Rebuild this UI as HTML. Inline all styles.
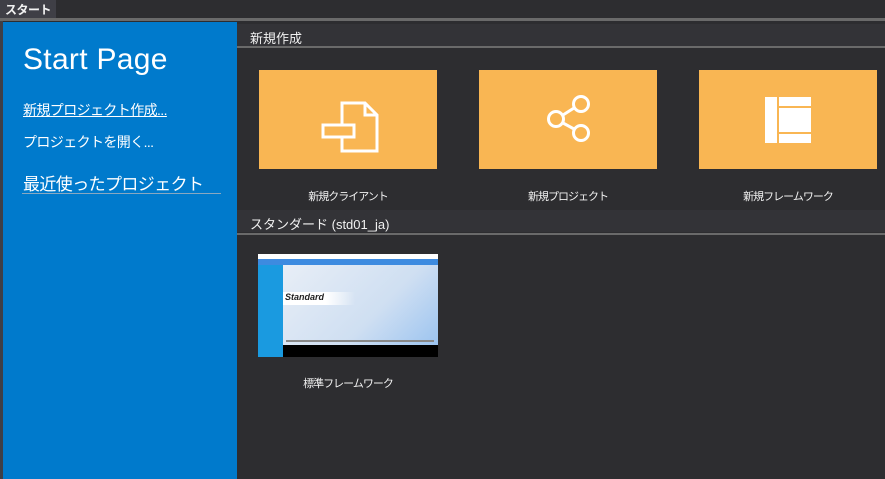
<!DOCTYPE html>
<html><head><meta charset="utf-8"><style>
*{margin:0;padding:0;box-sizing:border-box}
body{width:885px;height:479px;background:#2d2d30;position:relative;overflow:hidden;font-family:"Liberation Sans","Noto Sans CJK JP",sans-serif;color:#f1f1f1}
.a{position:absolute}
.tile{position:absolute;top:70px;width:178px;height:99px;background:#f9b653}
.lbl{position:absolute;font-size:11px;letter-spacing:-1px;text-align:center;width:178px}
.hdr{position:absolute;left:237px;width:648px;height:22px;background:#333337;font-size:13px;padding:4px 0 0 13px}
.ln{position:absolute;left:237px;width:648px;height:2px;background:#6a6a6a}
</style></head><body>
<div class="a" style="left:0;top:0;width:885px;height:19px;background:#2d2d30"></div>
<div class="a" style="left:0;top:0;width:56px;height:18px;background:#3f3f46;font-size:12px;letter-spacing:-0.5px;font-weight:bold;padding:1px 0 0 5px;white-space:nowrap">スタート</div>
<div class="a" style="left:0;top:18px;width:885px;height:3px;background:#6a6a6a"></div>
<div class="a" style="left:0;top:21px;width:3px;height:458px;background:#3f3f46"></div>
<div class="a" style="left:3px;top:22px;width:234px;height:457px;background:#007acc"></div>
<div class="a" style="left:23px;top:43px;font-size:30px;color:#fff;letter-spacing:0.3px">Start Page</div>
<div class="a" style="left:23px;top:100px;font-size:14px;letter-spacing:-0.6px;color:#fff;text-decoration:underline;white-space:nowrap">新規プロジェクト作成...</div>
<div class="a" style="left:23px;top:132px;font-size:14px;letter-spacing:-0.6px;color:#fff;white-space:nowrap">プロジェクトを開く...</div>
<div class="a" style="left:23px;top:170px;font-size:17px;letter-spacing:-0.6px;color:#fff;white-space:nowrap">最近使ったプロジェクト</div>
<div class="a" style="left:22px;top:193px;width:199px;height:1px;background:#8aa8c0"></div>
<div class="hdr" style="top:24px">新規作成</div>
<div class="ln" style="top:46px"></div>
<div class="tile" style="left:259px"><svg width="178" height="99" viewBox="0 0 178 99"><g fill="none" stroke="#fff" stroke-width="3"><path d="M83 33H106L118 45V81H83Z M106 33V45H118"/><rect x="64" y="55" width="31" height="12" fill="#f9b653"/></g></svg></div>
<div class="tile" style="left:479px"><svg width="178" height="99" viewBox="0 0 178 99"><g fill="none" stroke="#fff" stroke-width="3"><circle cx="102" cy="34" r="7.5"/><circle cx="77" cy="49" r="7.5"/><circle cx="102" cy="63" r="7.5"/><path d="M84 45L95 38M84 53L95 59"/></g></svg></div>
<div class="tile" style="left:699px"><svg width="178" height="99" viewBox="0 0 178 99"><g fill="#fff"><rect x="66" y="27" width="12" height="46"/><rect x="80" y="27" width="32" height="9"/><rect x="80" y="38" width="32" height="24"/><rect x="80" y="64" width="32" height="9"/></g></svg></div>
<div class="lbl" style="left:259px;top:188px">新規クライアント</div>
<div class="lbl" style="left:479px;top:188px">新規プロジェクト</div>
<div class="lbl" style="left:699px;top:188px">新規フレームワーク</div>
<div class="hdr" style="top:210px">スタンダード (std01_ja)</div>
<div class="ln" style="top:233px"></div>
<div class="a" style="left:258px;top:254px;width:180px;height:103px;background:#fff;overflow:hidden">
<div class="a" style="left:0;top:5px;width:180px;height:6px;background:#3d8be0"></div>
<div class="a" style="left:0;top:11px;width:25px;height:92px;background:#1a9ae0"></div>
<div class="a" style="left:25px;top:11px;width:155px;height:80px;background:linear-gradient(135deg,#e8eef6,#cfdff2 60%,#9cc4f0)"></div>
<div class="a" style="left:25px;top:38px;width:72px;height:13px;background:linear-gradient(90deg,#fff 60%,rgba(255,255,255,0));font-size:9px;font-style:italic;font-weight:bold;color:#222;padding-left:2px">Standard</div>
<div class="a" style="left:28px;top:86px;width:148px;height:2px;background:#888"></div>
<div class="a" style="left:25px;top:91px;width:155px;height:12px;background:#000"></div>
</div>
<div class="lbl" style="left:259px;top:375px">標準フレームワーク</div>
</body></html>
